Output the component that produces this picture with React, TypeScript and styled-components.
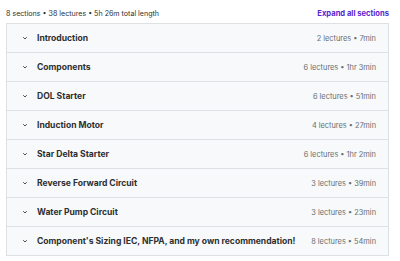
import React from "react";
import styled, { createGlobalStyle } from "styled-components";

const Global = createGlobalStyle`
  html, body { margin: 0; padding: 0; background: #fff; }
  body { font-family: Inter, "Noto Sans", sans-serif; color: #2d2f31; }
`;

const Page = styled.div`
  width: 400px;
  height: 261px;
  padding: 6px 11px 0 6px;
  box-sizing: border-box;
`;

const Header = styled.div`
  display: flex;
  justify-content: space-between;
  align-items: center;
  height: 15px;
  margin-bottom: 2px;
`;

const Summary = styled.span`
  font-size: 7.1px;
  color: #2d2f31;
`;

const Expand = styled.span`
  font-size: 7.6px;
  font-weight: 700;
  color: #5624d0;
`;

const Panel = styled.div`
  border: 1px solid #dde1e4;
  border-bottom: none;
`;

const Row = styled.div`
  display: flex;
  align-items: center;
  height: 28px;
  border-bottom: 1px solid #dde1e4;
  background: #f7f9fa;
  padding: 0 12px 0 14px;
`;

const Chevron = styled.svg`
  width: 8px;
  height: 8px;
  margin-right: 8px;
  flex: none;
`;

const Title = styled.span`
  flex: 1;
  font-size: 8.55px;
  font-weight: 700;
  color: #2d2f31;
  white-space: nowrap;
`;

const Meta = styled.span`
  font-size: 7.4px;
  color: #6a6f73;
  white-space: nowrap;
`;

const sections: [string, string][] = [
  ["Introduction", "2 lectures • 7min"],
  ["Components", "6 lectures • 1hr 3min"],
  ["DOL Starter", "6 lectures • 51min"],
  ["Induction Motor", "4 lectures • 27min"],
  ["Star Delta Starter", "6 lectures • 1hr 2min"],
  ["Reverse Forward Circuit", "3 lectures • 39min"],
  ["Water Pump Circuit", "3 lectures • 23min"],
  ["Component's Sizing IEC, NFPA, and my own recommendation!", "8 lectures • 54min"],
];

export default function App() {
  return (
    <>
      <Global />
      <Page>
        <Header>
          <Summary>8 sections • 38 lectures • 5h 26m total length</Summary>
          <Expand>Expand all sections</Expand>
        </Header>
        <Panel>
          {sections.map(([t, m]) => (
            <Row key={t}>
              <Chevron viewBox="0 0 8 8">
                <path d="M2.2 3.2 L4 5 L5.8 3.2" fill="none" stroke="#4a4d50" strokeWidth="1" />
              </Chevron>
              <Title>{t}</Title>
              <Meta>{m}</Meta>
            </Row>
          ))}
        </Panel>
      </Page>
    </>
  );
}
